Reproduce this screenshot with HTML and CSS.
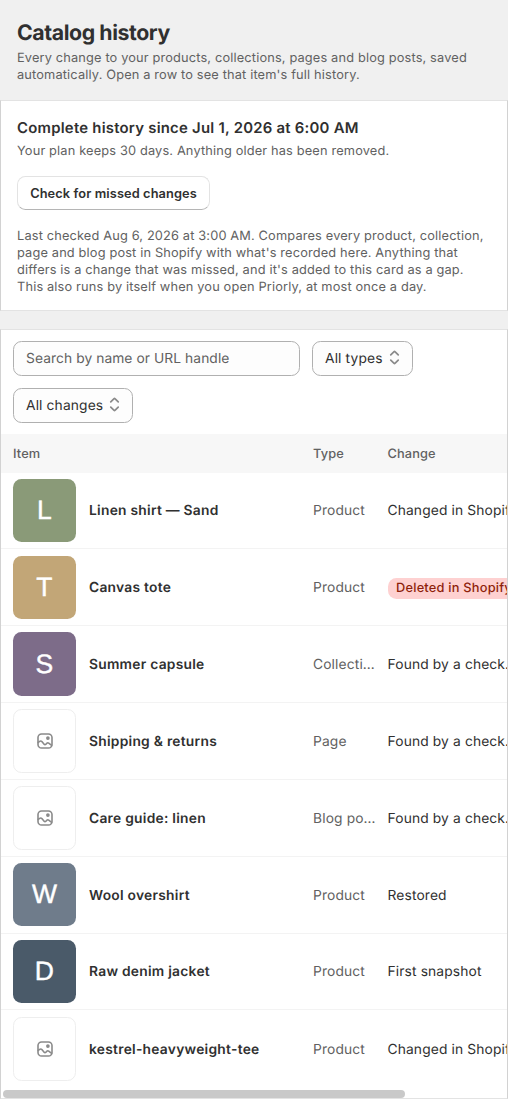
FILE: index.html
```html
<!DOCTYPE html>
<html lang="en">
<head>
<meta charset="utf-8">
<title>Catalog history</title>
<link rel="stylesheet" href="styles.css">
</head>
<body>
<svg class="defs" width="0" height="0" aria-hidden="true">
  <symbol id="image" viewBox="0 0 16 16" fill="none" stroke="currentColor" stroke-width="1.6" stroke-linecap="round" stroke-linejoin="round">
    <rect x="1" y="1" width="14" height="14" rx="3.6"/>
    <path d="M1.2 9.4 L2.7 8.3 Q3.9 7.5 4.9 8.6 L7.1 11.2 Q8 12.1 8.9 11.2 L10 10.1 Q10.8 9.4 11.7 10.1 L14.6 12.3"/>
    <circle cx="10.9" cy="5.1" r="1.05" fill="currentColor"/>
  </symbol>
  <symbol id="select" viewBox="0 0 10 16" fill="none" stroke="currentColor" stroke-width="1.8" stroke-linecap="round" stroke-linejoin="round">
    <path d="M1 5.2 L4.3 1.9 Q5 1.3 5.7 1.9 L9 5.2 M1 10.8 L4.3 14.1 Q5 14.7 5.7 14.1 L9 10.8"/>
  </symbol>
</svg>
<header class="page-header">
  <h1 class="page-title">Catalog history</h1>
  <p class="small">Every change to your products, collections, pages and blog posts, saved<br>automatically. Open a row to see that item's full history.</p>
</header>
<section class="card summary">
  <h2 class="card-title">Complete history since Jul 1, 2026 at 6:00 AM</h2>
  <p class="small">Your plan keeps 30 days. Anything older has been removed.</p>
  <button class="button" type="button">Check for missed changes</button>
  <p class="small">Last checked Aug 6, 2026 at 3:00 AM. Compares every product, collection,<br>page and blog post in Shopify with what's recorded here. Anything that<br>differs is a change that was missed, and it's added to this card as a gap.<br>This also runs by itself when you open Priorly, at most once a day.</p>
</section>
<section class="card catalog">
  <div class="filters">
    <div class="field search">Search by name or URL handle</div>
    <div class="field">All types<svg class="select-icon"><use href="#select"/></svg></div>
    <div class="field">All changes<svg class="select-icon"><use href="#select"/></svg></div>
  </div>
  <div class="row head"><span>Item</span><span>Type</span><span>Change</span></div>
  <div class="row"><div class="thumb sage">L</div><span class="name">Linen shirt — Sand</span><span class="type">Product</span><span class="change">Changed in Shopify</span></div>
  <div class="row"><div class="thumb sand">T</div><span class="name">Canvas tote</span><span class="type">Product</span><span class="change"><span class="badge">Deleted in Shopify</span></span></div>
  <div class="row"><div class="thumb plum">S</div><span class="name">Summer capsule</span><span class="type">Collecti…</span><span class="change">Found by a check.</span></div>
  <div class="row"><div class="thumb empty"><svg class="image-icon"><use href="#image"/></svg></div><span class="name">Shipping &amp; returns</span><span class="type">Page</span><span class="change">Found by a check.</span></div>
  <div class="row"><div class="thumb empty"><svg class="image-icon"><use href="#image"/></svg></div><span class="name">Care guide: linen</span><span class="type">Blog po…</span><span class="change">Found by a check.</span></div>
  <div class="row"><div class="thumb slate">W</div><span class="name">Wool overshirt</span><span class="type">Product</span><span class="change">Restored</span></div>
  <div class="row"><div class="thumb denim">D</div><span class="name">Raw denim jacket</span><span class="type">Product</span><span class="change">First snapshot</span></div>
  <div class="row"><div class="thumb empty"><svg class="image-icon"><use href="#image"/></svg></div><span class="name">kestrel-heavyweight-tee</span><span class="type">Product</span><span class="change">Changed in Shopify</span></div>
  <div class="scrollbar"><div class="scroll-thumb"></div></div>
</section>
</body>
</html>
```
FILE: styles.css
```css
* { box-sizing: border-box; }
body {
  margin: 0;
  height: 1099px;
  overflow: hidden;
  display: flex;
  flex-direction: column;
  background: #f0f0f0;
  color: #303030;
  font-family: Inter, "Liberation Sans", sans-serif;
  font-size: 13.8px;
  letter-spacing: 0.13px;
  white-space: nowrap;
  text-rendering: geometricPrecision;
}
.defs { position: absolute; }
h1, h2, p { margin: 0; }
.page-header { height: 99.5px; padding: 21px 17px 0; }
.page-title { font-size: 21.3px; line-height: 25px; font-weight: 650; letter-spacing: -0.42px; margin-bottom: 4px; }
.small { font-size: 12.8px; line-height: 17px; color: #616161; letter-spacing: 0.15px; }
.card { background: #fff; border: 1px solid; border-color: #e3e3e3 #d2d2d2 #e3e3e3 #d2d2d2; }
.summary { height: 211px; padding: 17px 16px 0; }
.card-title { font-size: 14.9px; line-height: 21px; font-weight: 600; letter-spacing: 0.24px; margin-bottom: 4.5px; }
.button {
  display: block;
  width: 193px;
  height: 33.5px;
  margin: 16px 0 18.2px;
  padding: 1px 0 0;
  border: 1px solid #e3e3e3;
  border-bottom-color: #b5b5b5;
  border-radius: 8.5px;
  background: #fff;
  color: #303030;
  font: 600 12.8px/31px Inter, "Liberation Sans", sans-serif;
  letter-spacing: 0.1px;
}
.catalog { margin-top: 18px; height: 770px; overflow: hidden; }
.filters { display: flex; flex-wrap: wrap; gap: 12px; padding: 11px 12px 0; height: 104px; align-content: flex-start; }
.field {
  display: flex;
  align-items: center;
  gap: 6px;
  height: 35px;
  padding: 1px 12px 0;
  border: 1px solid #b0b0b0;
  border-radius: 8.5px;
  background: #fdfdfd;
}
.search { width: 287px; color: #616161; letter-spacing: 0.07px; }
.select-icon { width: 11px; height: 15px; margin-top: -2px; color: #8a8a8a; }
.row {
  display: grid;
  grid-template-columns: 76px 224px 74.5px 200px;
  align-items: center;
  height: 76.85px;
  padding-left: 12px;
  border-bottom: 1px solid #f3f3f3;
}
.row:nth-last-child(2) { border-bottom: 0; }
.row > span { padding-top: 2px; }
.head {
  grid-template-columns: 300px 74.5px 200px;
  height: 39px;
  background: #f7f7f7;
  border: 0;
  color: #616161;
  font-size: 12.8px;
  font-weight: 500;
  letter-spacing: 0.12px;
}
.thumb {
  display: flex;
  align-items: center;
  justify-content: center;
  width: 63px;
  height: 63.5px;
  border-radius: 8.5px;
  color: #fff;
  font: 400 26.5px/1 "Liberation Sans", sans-serif;
  -webkit-text-stroke: 0.4px #fff;
}
.sage { background: #8a9a78; }
.sand { background: #c2a677; }
.plum { background: #7d6c89; }
.slate { background: #6f7c8b; }
.denim { background: #4a5a69; }
.empty { border: 1px solid #eeeeee; }
.image-icon { width: 16px; height: 16px; color: #8a8a8a; }
.name { font-weight: 600; letter-spacing: 0.26px; }
.type { color: #616161; }
.badge {
  display: inline-block;
  height: 21px;
  padding: 0 8.5px;
  border-radius: 8.5px;
  background: #fed1d1;
  color: #8e1f0b;
  font-size: 12.8px;
  font-weight: 500;
  line-height: 21px;
  letter-spacing: 0.22px;
}
.scrollbar { height: 12px; padding: 3px 2px 0; }
.scroll-thumb { width: 402px; height: 8px; border-radius: 4px; background: #c9c9c9; }
```
